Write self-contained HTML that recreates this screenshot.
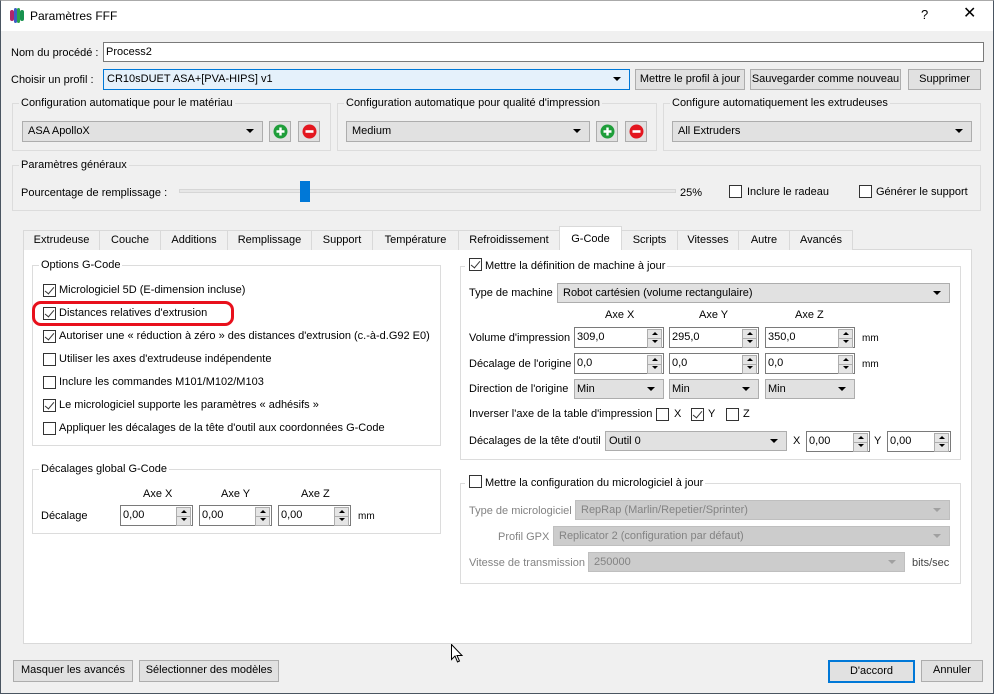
<!DOCTYPE html>
<html><head><meta charset="utf-8">
<style>
*{box-sizing:border-box;margin:0;padding:0}
body{width:994px;height:694px;overflow:hidden;background:#f0f0f0;font-family:"Liberation Sans",sans-serif;font-size:11px;color:#000;position:relative}
.a{position:absolute}
.t{position:absolute;line-height:16px;white-space:nowrap}
.btn{position:absolute;background:#e1e1e1;border:1px solid #adadad;text-align:center;line-height:19px;white-space:nowrap}
.combo{position:absolute;background:#e1e1e1;border:1px solid #adadad;line-height:18px;padding-left:5px;white-space:nowrap}
.combo:after{content:"";position:absolute;right:8px;top:7px;border-left:4px solid transparent;border-right:4px solid transparent;border-top:4px solid #000}
.combo.dis{background:#cccccc;border-color:#bfbfbf;color:#838383}
.combo.dis:after{border-top-color:#a0a0a0}
.gb{position:absolute;border:1px solid #dcdcdc}
.lg{position:absolute;top:-9px;left:6px;padding:0 2px;line-height:16px;white-space:nowrap}
.cb{position:absolute;width:13px;height:13px;border:1px solid #333;background:#fff}
.cb.c:after{content:"";position:absolute;left:3px;top:0px;width:4px;height:8px;border-right:1px solid #333;border-bottom:1px solid #333;transform:rotate(40deg)}
.spin{position:absolute;background:#fff;border:1px solid #7a7a7a;line-height:18px;padding-left:2px;height:21px}
.spin:after{content:"";position:absolute;right:1px;top:1px;width:13px;height:17px;background:#e5e5e5;border:1px solid #adadad;background-image:linear-gradient(#adadad,#adadad);background-size:100% 1px;background-position:0 50%;background-repeat:no-repeat}
.spin i{position:absolute;right:5px;width:0;height:0;border-left:3px solid transparent;border-right:3px solid transparent;z-index:2}
.spin i.u{top:4px;border-bottom:3px solid #000}
.spin i.d{top:12px;border-top:3px solid #000}
.tab{position:absolute;top:230px;height:20px;border:1px solid #d9d9d9;border-bottom:none;background:#f0f0f0;text-align:center;line-height:18px}
</style></head><body>
<div class="a" style="left:0;top:0;width:994px;height:694px;border:1px solid #4a5561;border-top-color:#aaa;z-index:50;pointer-events:none"></div>
<div class="a" style="left:0;top:0;width:994px;height:31px;background:#fff"></div>
<svg class="a" style="left:10px;top:8px" width="14" height="15" viewBox="0 0 14 15"><rect x="0" y="2" width="4" height="11" rx="2" fill="#b0256a"/><rect x="4" y="0" width="3" height="15" rx="1.5" fill="#3b5fc4"/><rect x="7" y="0" width="3" height="15" rx="1.5" fill="#2aa34a"/><rect x="10" y="2" width="4" height="11" rx="2" fill="#18924f"/></svg>
<div class="t" style="left:30px;top:8px;font-size:12px">Paramètres FFF</div>
<div class="t" style="left:921px;top:7px;font-size:13px">?</div>
<div class="t" style="left:963px;top:6px;font-size:16px">✕</div>

<div class="t" style="left:11px;top:45px">Nom du procédé :</div>
<div class="a" style="left:103px;top:42px;width:881px;height:20px;background:#fff;border:1px solid #7a7a7a;line-height:18px;padding-left:2px">Process2</div>
<div class="t" style="left:11px;top:72px">Choisir un profil :</div>
<div class="combo" style="left:103px;top:69px;width:527px;height:21px;background:#e5f1fb;border-color:#0078d7;padding-left:3px">CR10sDUET ASA+[PVA-HIPS] v1</div>
<div class="btn" style="left:635px;top:69px;width:110px;height:21px">Mettre le profil à jour</div>
<div class="btn" style="left:750px;top:69px;width:151px;height:21px">Sauvegarder comme nouveau</div>
<div class="btn" style="left:908px;top:69px;width:73px;height:21px">Supprimer</div>

<div class="gb" style="left:12px;top:103px;width:319px;height:48px"><div class="lg" style="background:#f0f0f0">Configuration automatique pour le matériau</div></div>
<div class="combo" style="left:22px;top:121px;width:241px;height:21px">ASA ApolloX</div>
<div class="btn" style="left:269px;top:121px;width:22px;height:21px"><svg style="position:absolute;left:3px;top:2px" width="15" height="15"><circle cx="7.5" cy="7.5" r="7" fill="#1f9e3a"/><path d="M7.5 3.5v8M3.5 7.5h8" stroke="#fff" stroke-width="2.4"/></svg></div>
<div class="btn" style="left:298px;top:121px;width:22px;height:21px"><svg style="position:absolute;left:3px;top:2px" width="15" height="15"><circle cx="7.5" cy="7.5" r="7" fill="#e3161f"/><path d="M3.5 7.5h8" stroke="#fff" stroke-width="2.6"/></svg></div>

<div class="gb" style="left:337px;top:103px;width:320px;height:48px"><div class="lg" style="background:#f0f0f0">Configuration automatique pour qualité d'impression</div></div>
<div class="combo" style="left:346px;top:121px;width:244px;height:21px">Medium</div>
<div class="btn" style="left:596px;top:121px;width:22px;height:21px"><svg style="position:absolute;left:3px;top:2px" width="15" height="15"><circle cx="7.5" cy="7.5" r="7" fill="#1f9e3a"/><path d="M7.5 3.5v8M3.5 7.5h8" stroke="#fff" stroke-width="2.4"/></svg></div>
<div class="btn" style="left:625px;top:121px;width:22px;height:21px"><svg style="position:absolute;left:3px;top:2px" width="15" height="15"><circle cx="7.5" cy="7.5" r="7" fill="#e3161f"/><path d="M3.5 7.5h8" stroke="#fff" stroke-width="2.6"/></svg></div>

<div class="gb" style="left:663px;top:103px;width:318px;height:48px"><div class="lg" style="background:#f0f0f0">Configure automatiquement les extrudeuses</div></div>
<div class="combo" style="left:672px;top:121px;width:300px;height:21px">All Extruders</div>

<div class="gb" style="left:12px;top:165px;width:969px;height:46px"><div class="lg" style="background:#f0f0f0">Paramètres généraux</div></div>
<div class="t" style="left:21px;top:185px">Pourcentage de remplissage :</div>
<div class="a" style="left:179px;top:189px;width:497px;height:4px;background:#e7e7e7;border:1px solid #d6d6d6"></div>
<div class="a" style="left:300px;top:181px;width:10px;height:21px;background:#0078d7"></div>
<div class="t" style="left:680px;top:185px">25%</div>
<div class="cb" style="left:729px;top:185px"></div><div class="t" style="left:747px;top:184px">Inclure le radeau</div>
<div class="cb" style="left:859px;top:185px"></div><div class="t" style="left:876px;top:184px">Générer le support</div>

<div class="a" style="left:23px;top:249px;width:949px;height:395px;background:#fff;border:1px solid #d9d9d9"></div>
<div class="tab" style="left:23px;width:77px">Extrudeuse</div>
<div class="tab" style="left:99px;width:62px">Couche</div>
<div class="tab" style="left:160px;width:68px">Additions</div>
<div class="tab" style="left:227px;width:85px">Remplissage</div>
<div class="tab" style="left:311px;width:62px">Support</div>
<div class="tab" style="left:372px;width:87px">Température</div>
<div class="tab" style="left:458px;width:102px">Refroidissement</div>
<div class="tab" style="left:559px;top:226px;width:63px;height:24px;background:#fff;line-height:24px">G-Code</div>
<div class="tab" style="left:621px;width:57px">Scripts</div>
<div class="tab" style="left:677px;width:62px">Vitesses</div>
<div class="tab" style="left:738px;width:52px">Autre</div>
<div class="tab" style="left:789px;width:64px">Avancés</div>

<div class="gb" style="left:32px;top:265px;width:409px;height:181px"><div class="lg" style="background:#fff">Options G-Code</div></div>
<div class="cb c" style="left:43px;top:284px"></div><div class="t" style="left:59px;top:282px">Micrologiciel 5D (E-dimension incluse)</div>
<div class="cb c" style="left:43px;top:307px"></div><div class="t" style="left:59px;top:305px">Distances relatives d'extrusion</div>
<div class="cb c" style="left:43px;top:330px"></div><div class="t" style="left:59px;top:328px">Autoriser une « réduction à zéro » des distances d'extrusion (c.-à-d.G92 E0)</div>
<div class="cb" style="left:43px;top:353px"></div><div class="t" style="left:59px;top:351px">Utiliser les axes d'extrudeuse indépendente</div>
<div class="cb" style="left:43px;top:376px"></div><div class="t" style="left:59px;top:374px">Inclure les commandes M101/M102/M103</div>
<div class="cb c" style="left:43px;top:399px"></div><div class="t" style="left:59px;top:397px">Le micrologiciel supporte les paramètres « adhésifs »</div>
<div class="cb" style="left:43px;top:422px"></div><div class="t" style="left:59px;top:420px">Appliquer les décalages de la tête d'outil aux coordonnées G-Code</div>
<div class="a" style="left:32px;top:301px;width:202px;height:25px;border:3px solid #e8101c;border-radius:9px"></div>

<div class="gb" style="left:32px;top:469px;width:409px;height:65px"><div class="lg" style="background:#fff">Décalages global G-Code</div></div>
<div class="t" style="left:143px;top:486px">Axe X</div>
<div class="t" style="left:221px;top:486px">Axe Y</div>
<div class="t" style="left:301px;top:486px">Axe Z</div>
<div class="t" style="left:41px;top:508px">Décalage</div>
<div class="spin" style="left:120px;top:505px;width:73px">0,00<i class="u"></i><i class="d"></i></div>
<div class="spin" style="left:199px;top:505px;width:73px">0,00<i class="u"></i><i class="d"></i></div>
<div class="spin" style="left:278px;top:505px;width:73px">0,00<i class="u"></i><i class="d"></i></div>
<div class="t" style="left:358px;top:509px;font-size:10px">mm</div>

<div class="gb" style="left:460px;top:266px;width:501px;height:194px"><div class="lg" style="background:#fff;left:4px;padding-left:4px;padding-right:2px"><span class="cb c" style="position:relative;display:inline-block;vertical-align:-2px;margin-right:3px"></span>Mettre la définition de machine à jour</div></div>
<div class="t" style="left:469px;top:285px">Type de machine</div>
<div class="combo" style="left:557px;top:283px;width:393px;height:20px">Robot cartésien (volume rectangulaire)</div>
<div class="t" style="left:605px;top:307px">Axe X</div>
<div class="t" style="left:699px;top:307px">Axe Y</div>
<div class="t" style="left:795px;top:307px">Axe Z</div>
<div class="t" style="left:469px;top:330px">Volume d'impression</div>
<div class="spin" style="left:574px;top:327px;width:90px">309,0<i class="u"></i><i class="d"></i></div>
<div class="spin" style="left:669px;top:327px;width:90px">295,0<i class="u"></i><i class="d"></i></div>
<div class="spin" style="left:765px;top:327px;width:90px">350,0<i class="u"></i><i class="d"></i></div>
<div class="t" style="left:862px;top:331px;font-size:10px">mm</div>
<div class="t" style="left:469px;top:356px">Décalage de l'origine</div>
<div class="spin" style="left:574px;top:353px;width:90px">0,0<i class="u"></i><i class="d"></i></div>
<div class="spin" style="left:669px;top:353px;width:90px">0,0<i class="u"></i><i class="d"></i></div>
<div class="spin" style="left:765px;top:353px;width:90px">0,0<i class="u"></i><i class="d"></i></div>
<div class="t" style="left:862px;top:357px;font-size:10px">mm</div>
<div class="t" style="left:469px;top:381px">Direction de l'origine</div>
<div class="combo" style="left:574px;top:379px;width:90px;height:20px;padding-left:2px">Min</div>
<div class="combo" style="left:669px;top:379px;width:90px;height:20px;padding-left:2px">Min</div>
<div class="combo" style="left:765px;top:379px;width:90px;height:20px;padding-left:2px">Min</div>
<div class="t" style="left:469px;top:406px">Inverser l'axe de la table d'impression</div>
<div class="cb" style="left:656px;top:408px"></div><div class="t" style="left:674px;top:406px">X</div>
<div class="cb c" style="left:691px;top:408px"></div><div class="t" style="left:708px;top:406px">Y</div>
<div class="cb" style="left:726px;top:408px"></div><div class="t" style="left:743px;top:406px">Z</div>
<div class="t" style="left:469px;top:433px">Décalages de la tête d'outil</div>
<div class="combo" style="left:605px;top:431px;width:182px;height:20px;padding-left:3px">Outil 0</div>
<div class="t" style="left:793px;top:433px">X</div>
<div class="spin" style="left:806px;top:431px;width:64px">0,00<i class="u"></i><i class="d"></i></div>
<div class="t" style="left:874px;top:433px">Y</div>
<div class="spin" style="left:887px;top:431px;width:64px">0,00<i class="u"></i><i class="d"></i></div>

<div class="gb" style="left:460px;top:483px;width:501px;height:101px"><div class="lg" style="background:#fff;left:4px;padding-left:4px;padding-right:2px"><span class="cb" style="position:relative;display:inline-block;vertical-align:-2px;margin-right:3px"></span>Mettre la configuration du micrologiciel à jour</div></div>
<div class="t" style="left:469px;top:503px;color:#838383">Type de micrologiciel</div>
<div class="combo dis" style="left:575px;top:500px;width:375px;height:20px">RepRap (Marlin/Repetier/Sprinter)</div>
<div class="t" style="left:498px;top:529px;color:#838383">Profil GPX</div>
<div class="combo dis" style="left:553px;top:526px;width:397px;height:20px">Replicator 2 (configuration par défaut)</div>
<div class="t" style="left:469px;top:555px;color:#838383">Vitesse de transmission</div>
<div class="combo dis" style="left:588px;top:552px;width:317px;height:20px">250000</div>
<div class="t" style="left:912px;top:555px;color:#444">bits/sec</div>

<svg class="a" style="left:451px;top:644px" width="13" height="20" viewBox="0 0 13 20"><path d="M0.5 0.5v15l3.5-3.5 2.5 6 2-1-2.5-5.5h5z" fill="#fff" stroke="#000"/></svg>

<div class="btn" style="left:13px;top:660px;width:120px;height:22px">Masquer les avancés</div>
<div class="btn" style="left:139px;top:660px;width:140px;height:22px">Sélectionner des modèles</div>
<div class="btn" style="left:828px;top:660px;width:87px;height:23px;border:2px solid #0078d7;line-height:19px">D'accord</div>
<div class="btn" style="left:921px;top:660px;width:62px;height:22px">Annuler</div>
</body></html>
